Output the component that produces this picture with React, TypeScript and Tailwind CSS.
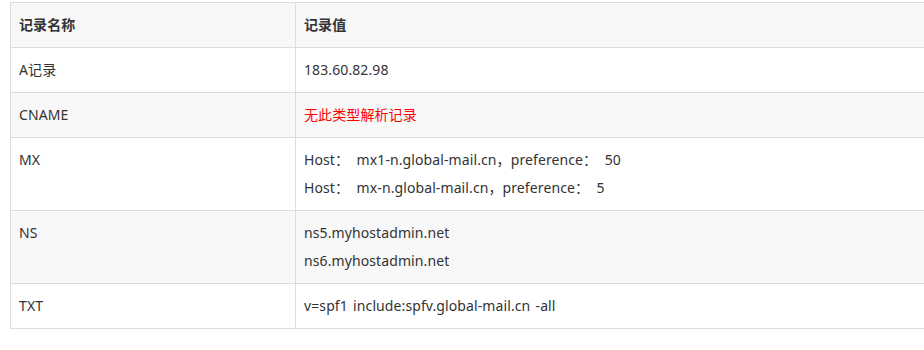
import React from "react";

const rows: { name: string; values: string[]; red?: boolean; tight?: boolean }[] = [
  { name: "A记录", values: ["183.60.82.98"] },
  { name: "CNAME", values: ["无此类型解析记录"], red: true },
  {
    name: "MX",
    values: [
      "Host：  mx1-n.global-mail.cn，preference：  50",
      "Host：  mx-n.global-mail.cn，preference：  5",
    ],
    tight: true,
  },
  { name: "NS", values: ["ns5.myhostadmin.net", "ns6.myhostadmin.net"] },
  { name: "TXT", values: ["v=spf1 include:spfv.global-mail.cn -all"] },
];

export default function App() {
  return (
    <div
      className="w-[924px] h-[350px] overflow-hidden bg-white pt-[2px] pl-[10px] text-[#333] text-[14px] leading-[28px] tracking-[0.1px] [word-spacing:1.5px]"
      style={{ fontFamily: '"Noto Sans", "Noto Sans CJK SC", sans-serif' }}
    >
      <div className="w-[960px] grid grid-cols-[285px_1fr] border-l border-t border-[#dddddd]">
        <div className="bg-[#f8f8f8] border-r border-b border-[#dddddd] px-2 py-2 font-bold">记录名称</div>
        <div className="bg-[#f8f8f8] border-r border-b border-[#dddddd] px-2 py-2 font-bold">记录值</div>
        {rows.map((r, i) => {
          const bg = i % 2 === 1 ? "bg-[#f8f8f8]" : "bg-white";
          return (
            <React.Fragment key={r.name}>
              <div className={`${bg} border-r border-b border-[#dddddd] px-2 py-2`}>{r.name}</div>
              <div
                className={`${bg} border-r border-b border-[#dddddd] px-2 py-2 ${r.red ? "text-[#ff0000]" : ""} ${
                  r.tight ? "[word-spacing:0px]" : ""
                }`}
              >
                {r.values.map((v) => (
                  <div key={v} className="whitespace-pre">{v}</div>
                ))}
              </div>
            </React.Fragment>
          );
        })}
      </div>
    </div>
  );
}
